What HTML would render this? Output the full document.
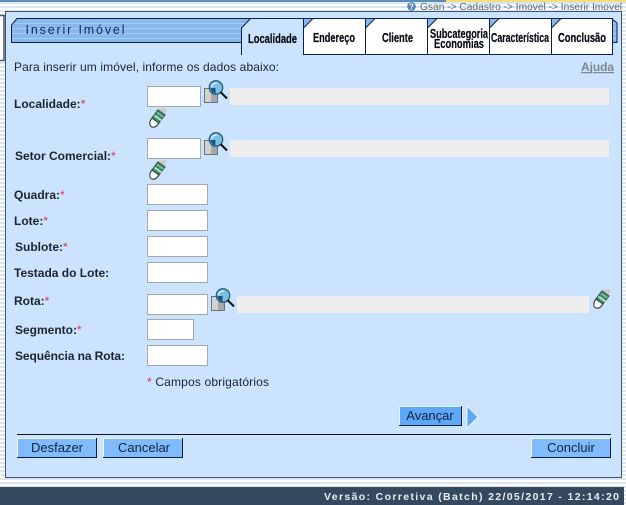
<!DOCTYPE html>
<html><head><meta charset="utf-8">
<style>
html,body{margin:0;padding:0;background:#fff;}
svg{display:block;}
text{font-family:"Liberation Sans",Arial,sans-serif;}
.l{font-size:12px;font-weight:bold;fill:#1c2430;}
.s{fill:#e0304a;font-size:12px;font-weight:normal;}
.t{font-size:12.500px;font-weight:bold;fill:#05080f;stroke:#05080f;stroke-width:.2px;}
.b{font-size:13px;fill:#0f2440;}
</style></head>
<body>
<svg width="626" height="505" viewBox="0 0 626 505" xmlns="http://www.w3.org/2000/svg">
<defs>
<pattern id="st" width="4" height="4" patternUnits="userSpaceOnUse"><rect width="4" height="4" fill="#fff"/><rect y="2" width="4" height="2" fill="#d9e6f2"/></pattern>
<pattern id="hd" width="4" height="5" patternUnits="userSpaceOnUse"><rect width="4" height="5" fill="#86b8ee"/><rect y="3" width="4" height="1" fill="#a9cef5"/></pattern>
<g id="lupa">
<path d="M0.500 7.500H13.500V21.500H0.500Z" fill="#a8a8a8" stroke="#6b747c" stroke-width="1"/>
<path d="M1 8H7V21H1Z" fill="#d2d2d2"/>
<circle cx="12" cy="6.500" r="6.700" fill="#7cc0e2" stroke="#245a82" stroke-width="1.300"/>
<path d="M7.500 6A4.800 4.800 0 0 1 13 2" fill="none" stroke="#d8f2fb" stroke-width="1.400"/>
<path d="M6.500 7A6 6 0 0 0 11.500 12.500V7Z" fill="#17557f"/>
<path d="M16.500 11L23 17.500" stroke="#111" stroke-width="2"/>
</g>
<g id="er">
<path d="M6 3L10 0.500L18 0.500L15 8Z" fill="#c9c9c9"/>
<path d="M3 10L10 15L8 17.500C6 19.800 2 19.800 1 17C0.300 14.500 1.300 12 3 10Z" fill="#fff" stroke="#33393c" stroke-width="1.100"/>
<path d="M2.800 10L9 2L16 7L10 15Z" fill="#3f9070" stroke="#2f4a42" stroke-width="1"/>
<path d="M5.500 7.500L12.500 12.500" stroke="#bfe6cf" stroke-width="1.700"/>
<path d="M8 4.500L14.500 9" stroke="#86c8a4" stroke-width="1.200"/>
</g>
</defs>

<rect width="626" height="505" fill="url(#st)"/>
<rect x="0" y="0" width="446" height="2" fill="#5f8db8"/>
<rect x="446" y="0" width="180" height="2" fill="#f3dd7c"/>
<rect x="-1" y="15.500" width="5" height="45" fill="#fff" stroke="#46586a" stroke-width="1.500"/>

<!-- panel -->
<rect x="5.500" y="11.500" width="616" height="466" fill="#cbe3fd" stroke="#3f5468" stroke-width="1"/>

<!-- breadcrumb -->
<circle cx="411.500" cy="6.500" r="4.300" fill="#4f83b8"/>
<text x="411.500" y="9.500" font-size="8" font-weight="bold" fill="#fff" text-anchor="middle">?</text>
<text x="420" y="10" font-size="10.500" fill="#5a6673" textLength="202" lengthAdjust="spacingAndGlyphs">Gsan -&gt; Cadastro -&gt; Imovel -&gt; Inserir Imovel</text>

<!-- title bar -->
<path d="M11.500 42.500V25L17 18.500H250V42.500Z" fill="url(#hd)" stroke="#0c1f45" stroke-width="1"/>
<text x="25.500" y="34" font-size="12.500" fill="#0f2a55" textLength="99" lengthAdjust="spacing">Inserir Imóvel</text>

<!-- right tab back -->
<path d="M612 19L617 23V42.500H612Z" fill="url(#hd)" stroke="#0c1f45" stroke-width="1"/>

<!-- active tab: panel colour, no bottom edge -->
<path d="M241.500 55V28L250.500 18.500H303.500V55Z" fill="#cbe3fd"/>
<path d="M241.500 55V28L250.500 18.500H303.500" fill="none" stroke="#0c1f45" stroke-width="1"/>

<!-- tabs -->
<g stroke="#0c1f45" stroke-width="1">
<path d="M303.500 18.500H365.500V54.500H303.500Z" fill="#fff"/>
<path d="M365.500 18.500H427.500V54.500H365.500Z" fill="#fff"/>
<path d="M427.500 18.500H489.500V54.500H427.500Z" fill="#fff"/>
<path d="M489.500 18.500H551.500V54.500H489.500Z" fill="#fff"/>
<path d="M551.500 18.500H612.500V54.500H551.500Z" fill="#fff"/>
<path d="M303.500 18.500H313L303.500 28Z" fill="#86b8ee"/>
<path d="M365.500 18.500H375L365.500 28Z" fill="#86b8ee"/>
<path d="M427.500 18.500H437L427.500 28Z" fill="#86b8ee"/>
<path d="M489.500 18.500H499L489.500 28Z" fill="#86b8ee"/>
<path d="M551.500 18.500H561L551.500 28Z" fill="#86b8ee"/>
</g>

<text class="t" x="248" y="43" textLength="49" lengthAdjust="spacingAndGlyphs">Localidade</text>
<text class="t" x="313" y="42" textLength="42" lengthAdjust="spacingAndGlyphs">Endereço</text>
<text class="t" x="382" y="42" textLength="31" lengthAdjust="spacingAndGlyphs">Cliente</text>
<text class="t" x="430" y="38" textLength="58" lengthAdjust="spacingAndGlyphs">Subcategoria</text>
<text class="t" x="434" y="48" textLength="50" lengthAdjust="spacingAndGlyphs">Economias</text>
<text class="t" x="491" y="42" textLength="58" lengthAdjust="spacingAndGlyphs">Característica</text>
<text class="t" x="558" y="42" textLength="48" lengthAdjust="spacingAndGlyphs">Conclusão</text>

<text x="14" y="71" font-size="12" fill="#1c2430" textLength="265" lengthAdjust="spacing">Para inserir um imóvel, informe os dados abaixo:</text>
<text x="581" y="71" font-size="12" font-weight="bold" fill="#7c8894" text-decoration="underline" textLength="33" lengthAdjust="spacing">Ajuda</text>

<!-- labels -->
<text class="l" x="14" y="108">Localidade:<tspan class="s">*</tspan></text>
<text class="l" x="15" y="160">Setor Comercial:<tspan class="s">*</tspan></text>
<text class="l" x="14" y="199">Quadra:<tspan class="s">*</tspan></text>
<text class="l" x="14" y="225">Lote:<tspan class="s">*</tspan></text>
<text class="l" x="15" y="251">Sublote:<tspan class="s">*</tspan></text>
<text class="l" x="14" y="277">Testada do Lote:</text>
<text class="l" x="14" y="305">Rota:<tspan class="s">*</tspan></text>
<text class="l" x="15" y="334">Segmento:<tspan class="s">*</tspan></text>
<text class="l" x="15" y="360" textLength="110" lengthAdjust="spacing">Sequência na Rota:</text>

<!-- inputs -->
<g fill="#fff" stroke="#a3a8ae" stroke-width="1">
<rect x="147.500" y="86.500" width="53" height="20"/>
<rect x="147.500" y="138.500" width="53" height="20"/>
<rect x="147.500" y="184.500" width="60" height="20"/>
<rect x="147.500" y="210.500" width="60" height="20"/>
<rect x="147.500" y="236.500" width="60" height="20"/>
<rect x="147.500" y="262.500" width="60" height="20"/>
<rect x="147.500" y="294.500" width="60" height="20"/>
<rect x="147.500" y="319.500" width="46" height="20"/>
<rect x="147.500" y="345.500" width="60" height="20"/>
</g>
<rect x="230" y="88" width="379" height="17" fill="#eeeeee"/>
<rect x="230" y="140" width="379" height="17" fill="#eeeeee"/>
<rect x="237" y="296" width="352" height="17" fill="#eeeeee"/>

<use href="#lupa" x="204" y="81"/>
<use href="#lupa" x="204" y="133"/>
<use href="#lupa" x="211" y="289"/>
<use href="#er" x="149" y="108"/>
<use href="#er" x="149" y="160"/>
<use href="#er" x="593" y="289"/>

<text x="147" y="386" font-size="12" fill="#1c2430" textLength="122" lengthAdjust="spacing"><tspan fill="#e0304a">*</tspan> Campos obrigatórios</text>

<!-- Avançar -->
<rect x="399" y="406" width="62" height="19" fill="#5ea8f8"/>
<path d="M399.500 425V406.500H461" fill="none" stroke="#e8f2fd"/>
<path d="M399 425.500H461.500V406" fill="none" stroke="#0c1f45"/>
<text class="b" x="430" y="420" text-anchor="middle">Avançar</text>
<path d="M467 406L478 417L467 428Z" fill="#5ea8f8" stroke="#fff" stroke-width="0.800"/>

<rect x="17" y="434" width="594" height="1" fill="#0c1424"/>

<!-- buttons -->
<g>
<rect x="17" y="438" width="80" height="19" fill="#80bcfd"/>
<path d="M17.500 457V438.500H97" fill="none" stroke="#eef6ff"/>
<path d="M17 457.500H96.500V438" fill="none" stroke="#0c1f45"/>
<text class="b" x="57" y="452" text-anchor="middle">Desfazer</text>
<rect x="103" y="438" width="80" height="19" fill="#80bcfd"/>
<path d="M103.500 457V438.500H183" fill="none" stroke="#eef6ff"/>
<path d="M103 457.500H182.500V438" fill="none" stroke="#0c1f45"/>
<text class="b" x="144" y="452" text-anchor="middle">Cancelar</text>
<rect x="531" y="438" width="80" height="19" fill="#80bcfd"/>
<path d="M531.500 457V438.500H611" fill="none" stroke="#eef6ff"/>
<path d="M531 457.500H610.500V438" fill="none" stroke="#0c1f45"/>
<text class="b" x="571" y="452" text-anchor="middle">Concluir</text>
</g>

<!-- footer -->
<rect x="0" y="487" width="624" height="18" fill="#34495e"/>
<text x="324" y="500" font-size="10.500" font-weight="bold" fill="#e6edf3" textLength="295" lengthAdjust="spacing">Versão: Corretiva (Batch) 22/05/2017 - 12:14:20</text>
</svg>
</body></html>
